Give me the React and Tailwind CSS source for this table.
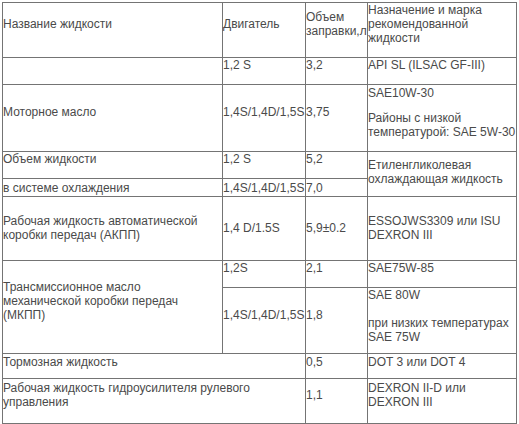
import React from "react";

function Cell({ children, className = "" }) {
  return (
    <div
      className={`bg-white flex flex-col justify-center whitespace-nowrap overflow-visible ${className}`}
    >
      {children}
    </div>
  );
}

const diesel = "1,4S/1,4D/1,5S";

export default function App() {
  return (
    <div className="p-[2px] bg-white min-h-screen">
      <div className="w-max grid grid-cols-[219px_82px_61px_148px] grid-rows-[54px_26px_66px_26px_17px_63px_26px_65px_24px_44px] gap-px p-px bg-[#747474] text-[12px] leading-[14px] text-[#4a4a4a] font-['Liberation_Sans',Arial,sans-serif]">
        {/* Header */}
        <Cell className="pb-3">Название жидкости</Cell>
        <Cell className="pb-3">Двигатель</Cell>
        <Cell className="pb-3">
          <span>Объем</span>
          <span>заправки,л</span>
        </Cell>
        <Cell className="pb-3">
          <span>Назначение и марка</span>
          <span>рекомендованной</span>
          <span>жидкости</span>
        </Cell>

        {/* Row 2 */}
        <Cell className="pb-3"></Cell>
        <Cell className="pb-3">1,2 S</Cell>
        <Cell className="pb-3">3,2</Cell>
        <Cell className="pb-3">API SL (ILSAC GF-III)</Cell>

        {/* Motor oil */}
        <Cell className="pb-3">Моторное масло</Cell>
        <Cell className="pb-3">{diesel}</Cell>
        <Cell className="pb-3">3,75</Cell>
        <Cell className="pb-3">
          <span>SAE10W-30</span>
          <span className="mt-[11px]">Районы с низкой</span>
          <span>температурой: SAE 5W-30</span>
        </Cell>

        {/* Coolant */}
        <Cell className="pb-3">Объем жидкости</Cell>
        <Cell className="pb-3">1,2 S</Cell>
        <Cell className="pb-3">5,2</Cell>
        <Cell className="row-span-2 pb-1">
          <span>Етиленгликолевая</span>
          <span>охлаждающая жидкость</span>
        </Cell>
        <Cell>в системе охлаждения</Cell>
        <Cell>{diesel}</Cell>
        <Cell>7,0</Cell>

        {/* Automatic */}
        <Cell className="pb-0.5">
          <span>Рабочая жидкость автоматической</span>
          <span>коробки передач (АКПП)</span>
        </Cell>
        <Cell className="pb-0.5">1,4 D/1.5S</Cell>
        <Cell className="pb-0.5">5,9±0.2</Cell>
        <Cell className="pb-0.5">
          <span>ESSOJWS3309 или ISU</span>
          <span>DEXRON III</span>
        </Cell>

        {/* Manual */}
        <Cell className="row-span-2 pb-3">
          <span>Трансмиссионное масло</span>
          <span>механической коробки передач</span>
          <span>(МКПП)</span>
        </Cell>
        <Cell className="pb-3">1,2S</Cell>
        <Cell className="pb-3">2,1</Cell>
        <Cell className="pb-3">SAE75W-85</Cell>
        <Cell className="pb-3">{diesel}</Cell>
        <Cell className="pb-3">1,8</Cell>
        <Cell className="justify-start">
          <span>SAE 80W</span>
          <span className="mt-[14px]">при низких температурах</span>
          <span>SAE 75W</span>
        </Cell>

        {/* Brake */}
        <Cell className="col-span-2 pb-2">Тормозная жидкость</Cell>
        <Cell className="pb-2">0,5</Cell>
        <Cell className="pb-2">DOT 3 или DOT 4</Cell>

        {/* Power steering */}
        <Cell className="col-span-2 pb-3">
          <span>Рабочая жидкость гидроусилителя рулевого</span>
          <span>управления</span>
        </Cell>
        <Cell className="pb-3">1,1</Cell>
        <Cell className="pb-3">
          <span>DEXRON II-D или</span>
          <span>DEXRON III</span>
        </Cell>
      </div>
    </div>
  );
}
